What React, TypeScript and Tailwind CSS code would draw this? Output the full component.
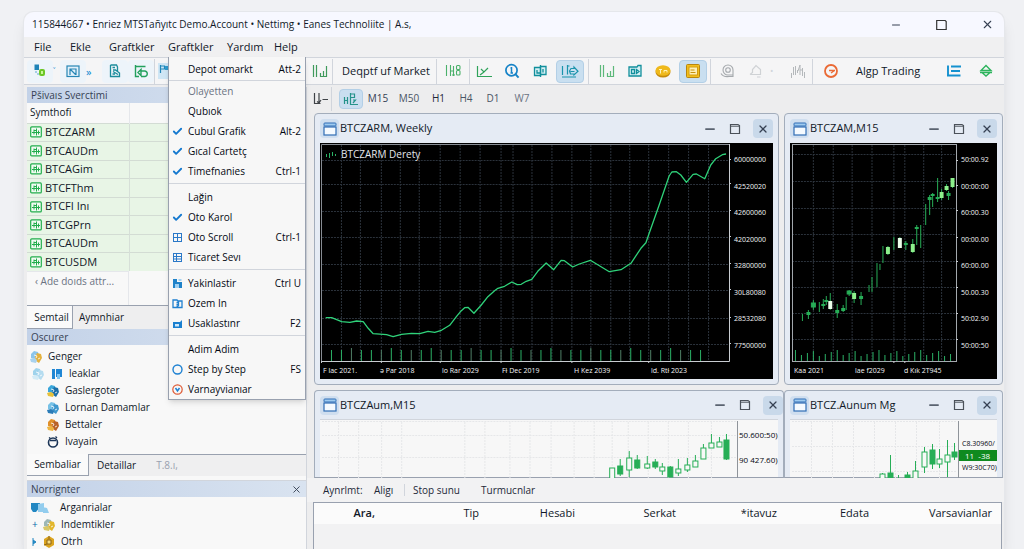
import React from "react";
import { Check, Minus, X } from "lucide-react";

type IconProps = { className?: string };

type Candle = {
  x: number;
  high: number;
  low: number;
  top?: number;
  bottom?: number;
  tone?: "solid" | "hollow" | "bright" | "white";
};

/* ---------- DATA ---------- */

const symbols = ["BTCZARM", "BTCAUDm", "BTCAGim", "BTCFThm", "BTCFI Inı", "BTCGPrn", "BTCAUDm", "BTCUSDM"];

const timeframes = [
  { name: "M15", style: "w-[30px] text-gray-700" },
  { name: "M50", style: "w-[32px] text-gray-600" },
  { name: "H1", style: "w-[27px] text-gray-800" },
  { name: "H4", style: "w-[28px] text-gray-600" },
  { name: "D1", style: "w-[26px] text-gray-600" },
  { name: "W7", style: "w-[32px] text-gray-500" },
];

const orderColumns = [
  { name: "Ara,", style: "w-[66px] pr-[5px] font-semibold" },
  { name: "Tip", style: "w-[104px] pr-[5px] font-normal" },
  { name: "Hesabi", style: "w-[96px] pr-[5px] font-normal" },
  { name: "Serkat", style: "w-[101px] pr-[5px] font-normal" },
  { name: "*itavuz", style: "w-[101px] pr-[5px] font-normal" },
  { name: "Edata", style: "w-[92px] pr-[5px] font-normal" },
  { name: "Varsavianlar", style: "w-[127px] pr-[9px] font-normal" },
];

const linePoints =
  "5.7,174.7 11.7,174.7 21.7,178.7 30,179.3 36.7,178 43.3,178.7 48.3,185.3 53.3,190.7 66.7,191.7 73.3,193.7 81.7,191.3 91.7,190.3 100,190.7 108.3,188.3 115,189.3 121.7,187.3 130,182.3 136.7,173.7 141.7,167.7 145,164.7 148.3,164.3 154.3,170.3 161.7,162 168.3,153.7 175,147.7 178.3,145.3 185,143.3 192.3,139 197.7,141.7 201.7,141.3 206.7,138.3 212.3,136.3 218.3,128.3 226.7,120 234.3,126.7 241.7,117.3 245,117.7 253.3,124 260,121 271,117.3 290,128.7 301.7,126.7 311.7,120.3 321.7,105.3 326.7,99.7 330,90.3 340,62 350,33 352.7,29 357.3,28.7 361.7,32 367.3,39.3 374,31.3 377.3,31 385.7,35.7 391.7,22 396.7,15.7 403.3,11.7 407,11";

const darkCandles: Candle[] = [
  { x: 12, high: 171, low: 178 },
  { x: 18, high: 167, low: 176, top: 169, bottom: 172 },
  { x: 23, high: 157, low: 167, top: 160, bottom: 164, tone: "solid" },
  { x: 29, high: 159, low: 169 },
  { x: 33, high: 156, low: 166, top: 161, bottom: 163 },
  { x: 36, high: 153, low: 162, top: 157, bottom: 159 },
  { x: 40, high: 150, low: 167, top: 158, bottom: 166, tone: "white" },
  { x: 47, high: 161, low: 175, top: 167, bottom: 170 },
  { x: 53, high: 162, low: 169, top: 165, bottom: 168 },
  { x: 56, high: 154, low: 167 },
  { x: 59, high: 147, low: 153, top: 148, bottom: 151, tone: "solid" },
  { x: 64, high: 148, low: 160, top: 150, bottom: 156, tone: "bright" },
  { x: 71, high: 149, low: 162, top: 153, bottom: 156 },
  { x: 79, high: 142, low: 149 },
  { x: 82, high: 134, low: 149 },
  { x: 87, high: 120, low: 144 },
  { x: 90, high: 121, low: 127 },
  { x: 93, high: 103, low: 120 },
  { x: 98, high: 103, low: 112, top: 104, bottom: 111, tone: "bright" },
  { x: 104, high: 94, low: 107 },
  { x: 110, high: 94, low: 105, top: 95, bottom: 105, tone: "white" },
  { x: 116, high: 98, low: 107, top: 100, bottom: 102 },
  { x: 123, high: 96, low: 110, top: 101, bottom: 109, tone: "bright" },
  { x: 127, high: 82, low: 102, top: 84, bottom: 86 },
  { x: 131, high: 82, low: 105 },
  { x: 136, high: 61, low: 82 },
  { x: 140, high: 52, low: 72, top: 54, bottom: 57 },
  { x: 143, high: 50, low: 64, top: 51, bottom: 53 },
  { x: 148, high: 35, low: 59, top: 54, bottom: 56 },
  { x: 152, high: 46, low: 57, top: 49, bottom: 55, tone: "bright" },
  { x: 157, high: 41, low: 48, top: 43, bottom: 47, tone: "bright" },
  { x: 159, high: 48, low: 57, top: 50, bottom: 53 },
  { x: 163, high: 35, low: 45, top: 35, bottom: 44, tone: "bright" },
];

const lightCandles: Candle[] = [
  { x: 291, high: 48, low: 58, top: 48, bottom: 60, tone: "hollow" },
  { x: 299, high: 39, low: 56, top: 46, bottom: 54, tone: "solid" },
  { x: 308, high: 31, low: 57, top: 38, bottom: 50, tone: "hollow" },
  { x: 316, high: 35, low: 49, top: 40, bottom: 48, tone: "solid" },
  { x: 326, high: 36, low: 49, top: 44, bottom: 48, tone: "hollow" },
  { x: 334, high: 39, low: 49, top: 42, bottom: 47, tone: "solid" },
  { x: 341, high: 43, low: 55, top: 47, bottom: 51, tone: "hollow" },
  { x: 349, high: 46, low: 57, top: 47, bottom: 57, tone: "solid" },
  { x: 357, high: 39, low: 56, top: 49, bottom: 53, tone: "hollow" },
  { x: 366, high: 38, low: 52, top: 45, bottom: 50, tone: "hollow" },
  { x: 374, high: 35, low: 47, top: 41, bottom: 47, tone: "hollow" },
  { x: 382, high: 24, low: 39, top: 28, bottom: 39, tone: "hollow" },
  { x: 390, high: 14, low: 28, top: 23, bottom: 28, tone: "hollow" },
  { x: 398, high: 17, low: 27, top: 22, bottom: 27, tone: "hollow" },
  { x: 405, high: 14, low: 40, top: 20, bottom: 39, tone: "solid" },
];

const lightCandlesSmall: Candle[] = [
  { x: 92, high: 53, low: 58, top: 54, bottom: 60, tone: "hollow" },
  { x: 100, high: 35, low: 58, top: 53, bottom: 60, tone: "solid" },
  { x: 108, high: 55, low: 58 },
  { x: 117, high: 52, low: 58, top: 55, bottom: 60, tone: "solid" },
  { x: 125, high: 41, low: 58, top: 51, bottom: 60, tone: "hollow" },
  { x: 134, high: 27, low: 53, top: 32, bottom: 47, tone: "hollow" },
  { x: 142, high: 24, low: 49, top: 30, bottom: 44, tone: "solid" },
  { x: 149, high: 29, low: 48, top: 39, bottom: 44, tone: "hollow" },
  { x: 157, high: 20, low: 57, top: 35, bottom: 42, tone: "hollow" },
  { x: 164, high: 23, low: 40, top: 32, bottom: 37, tone: "solid" },
];

/* ---------- ICONS ---------- */

const WindowIcon = () => (
  <svg className="w-[14px] h-[14px]" viewBox="0 0 14 14" fill="none">
    <rect x="1" y="5" width="12" height="8" fill="#f5faff" stroke="#2f6db5" strokeWidth="1.2" />
    <rect x="1" y="1" width="12" height="3" rx="0.8" fill="#9fcbf0" stroke="#2f6db5" />
  </svg>
);

const MaximizeIcon = () => (
  <svg className="w-[12px] h-[12px]" viewBox="0 0 12 12" fill="none" stroke="#4b5159">
    <path d="M1.5 1.5h7.5l1.5 1v8h-9z" strokeWidth="1.2" />
    <path d="M2 3.2h8" />
  </svg>
);

const SymbolIcon = () => (
  <svg className="w-[12px] h-[12px]" viewBox="0 0 12 12" fill="none" stroke="#22ad4c">
    <rect x="0.7" y="0.9" width="10.6" height="10" rx="1" strokeWidth="1.2" fill="#f1fbf2" />
    <path d="M2 6.500h8M4 3.500v5M6.500 2.500v7M8.500 4.500v4M4 4.500h2.500" />
  </svg>
);

const BarsIcon = ({ className }: IconProps) => (
  <svg className={`w-4 h-4 ${className}`} viewBox="0 0 16 16" fill="none" stroke="currentColor" strokeWidth="1.2">
    <path d="M1.5 2v12M4.5 2v12M8.5 10v4M11.5 8v6M14.5 3v11M8 13.5h7" />
  </svg>
);

const CandlesIcon = ({ className }: IconProps) => (
  <svg className={`w-4 h-4 ${className}`} viewBox="0 0 16 16" fill="none" stroke="currentColor" strokeWidth="1.1">
    <path d="M1.5 2v11M5.500 2v11M5 8h3M8.5 3v10M7 12h3" />
    <rect x="11.5" y="2.500" width="3.500" height="4" rx="1" />
    <rect x="11.5" y="7.500" width="3.500" height="4.500" rx="1" />
  </svg>
);

const WaveBarsIcon = () => (
  <svg className="w-4 h-4" viewBox="0 0 16 16" fill="none" stroke="#b4b8bb">
    <path d="M1.500 10v5M3.500 4v8M5.500 3v9M7.500 7v3M8 8l2-6v10M12.500 5v8M14.500 9v6M10 7h3" />
  </svg>
);

const LineChartIcon = () => (
  <svg className="w-4 h-4" viewBox="0 0 16 16" fill="none" stroke="#2fa35a" strokeWidth="1.2">
    <path d="M1.5 3v10.5H16M5 6l3 3 4-4M8 9l-4 3" />
  </svg>
);

const LensIcon = () => (
  <svg className="w-4 h-4" viewBox="0 0 16 16" fill="none" stroke="#1683c7">
    <circle cx="7.5" cy="7.2" r="5.6" strokeWidth="1.7" />
    <path d="M11.6 11.4l3 3.2" strokeWidth="2" />
    <path d="M7.5 4v6M6.500 5h1M6.500 10h2.500" strokeWidth="1.5" />
  </svg>
);

const SplitIcon = () => (
  <svg className="w-4 h-4" viewBox="0 0 16 16" fill="none" stroke="#118f9c" strokeWidth="1.3">
    <path d="M2.500 4.500h6v8h-6zM8.500 3.500h5.500v8H8.500z" fill="#d4eff4" />
    <path d="M8.500 2v12M5 7v3h3M11 6v3.500" />
  </svg>
);

const ShiftIcon = () => (
  <svg className="w-[18px] h-4" viewBox="0 0 18 16" fill="none" stroke="#1a93ac" strokeWidth="1.2">
    <path d="M1.5 3v9M6.500 2v9.500M6.500 3h2M1 14h14" />
    <path d="M9.500 8.500h4M10 5.500h3v-1.500l4 4.300-4 3.700V11h-3.500l-1-3z" />
  </svg>
);

const FlagIcon = () => (
  <svg className="w-4 h-4" viewBox="0 0 16 16" fill="none">
    <rect x="0" y="0" width="16" height="16" fill="#cfe6f5" />
    <path d="M2.500 2v8M2.500 3h4v3h-4" stroke="#2287b8" strokeWidth="1.200" />
    <path d="M7 3h3v4H7z" fill="#2f9bd0" />
  </svg>
);

const CameraIcon = () => (
  <svg className="w-4 h-4" viewBox="0 0 16 16" fill="none" stroke="#118f9c" strokeWidth="1.3">
    <path d="M2 4h8l1-1.500h3v10.500H2z" fill="#d4eff4" />
    <path d="M4.500 6.500h3v4h-3zM9.500 6.500l2.500 2-2.500 2z" />
  </svg>
);

const CoinIcon = () => (
  <svg className="w-[18px] h-4" viewBox="0 0 18 16" fill="none">
    <ellipse cx="9" cy="9" rx="7.5" ry="5.5" fill="#c58a0b" />
    <ellipse cx="9" cy="7.5" rx="7.5" ry="5.3" fill="#efb91c" />
    <path d="M5 6.5h3M6.5 6.5v4M10 9.5V7.500h3v2" stroke="#fff3bd" />
  </svg>
);

const GoldCardIcon = () => (
  <svg className="w-4 h-4" viewBox="0 0 16 16" fill="none">
    <rect x="1.5" y="1.5" width="13" height="13" rx="1" fill="#f2bf1d" stroke="#b8860f" />
    <rect x="4" y="4" width="8.500" height="8" fill="#fdf0b8" stroke="#d39d10" />
    <path d="M5.500 7h4M5.500 9.500h5" stroke="#c8930e" />
  </svg>
);

const AtIcon = () => (
  <svg className="w-4 h-4" viewBox="0 0 16 16" fill="none" stroke="#a5a9ad" strokeWidth="1.1">
    <circle cx="8" cy="7" r="2.300" />
    <path d="M3 7a5 5 0 0 1 10 0v6.500H9M3 7a5 5 0 0 0 5 5h5M1 10.500c1.500 2.500 4 3.500 8 3" />
  </svg>
);

const BellIcon = () => (
  <svg className="w-4 h-4" viewBox="0 0 16 16" fill="none" stroke="#cfd2d5" strokeWidth="1.2">
    <path d="M2 11.500l2.500-2V6.500L8 2.500l4.500 4v5H2M9 14h3.500" />
  </svg>
);

const GaugeIcon = () => (
  <svg className="w-4 h-4" viewBox="0 0 16 16" fill="none" stroke="#ea6a35">
    <circle cx="8" cy="8" r="6" strokeWidth="1.8" />
    <path d="M6 7.500h6M8 10l3.500-2.500" strokeWidth="1.3" />
  </svg>
);

const LinesIcon = () => (
  <svg className="w-4 h-4" viewBox="0 0 16 16" fill="none" stroke="#1591cf" strokeWidth="1.900">
    <path d="M2 2.500v10.500M5 3.500h10M5 8h9M1 12.500h13.500" />
  </svg>
);

const DiamondIcon = () => (
  <svg className="w-[14px] h-[14px]" viewBox="0 0 14 14" fill="none" stroke="#2cb45c" strokeWidth="1.4">
    <path d="M7 1.500L2 6.500h10zM1 8.500h12M3 8.500L7 12l4-3.500" />
  </svg>
);

const NewChartIcon = () => (
  <svg className="w-4 h-4" viewBox="0 0 16 16">
    <rect x="2.500" y="1.500" width="4.500" height="5.500" fill="#1d83b8" />
    <path d="M3 9h2M5 11h2" stroke="#5fa9cf" />
    <rect x="7" y="6" width="6" height="7" rx="2" fill="#6cc727" />
    <path d="M9 8h2v3H9z" fill="#c9f49a" />
  </svg>
);

const ProfileIcon = () => (
  <svg className="w-4 h-4" viewBox="0 0 16 16" fill="none" stroke="#2786b5" strokeWidth="1.2">
    <rect x="2" y="3" width="12" height="10.500" fill="#e1f1fb" />
    <path d="M5 12V6h6v6M5.500 6.500l5 5" />
  </svg>
);

const SheetIcon = () => (
  <svg className="w-4 h-4" viewBox="0 0 16 16" fill="none" stroke="#1b8c9c" strokeWidth="1.300">
    <path d="M3.500 2h6l1 2v4M3.500 2v11.500h9V10l-4-3H6M5.500 4.500H8M6 8.500l5 3M5.500 11H8" />
  </svg>
);

const RefreshChartIcon = () => (
  <svg className="w-4 h-4" viewBox="0 0 16 16" fill="none" stroke="#23a05d" strokeWidth="1.400">
    <path d="M2.500 2v11.500H6M2.500 3.500h10M5 9.500l3-3v6zM8 8h4a2.800 2.800 0 0 1 0 5.500H8" />
  </svg>
);

const AxisIcon = () => (
  <svg className="w-4 h-4" viewBox="0 0 16 16" fill="none" stroke="#3f4347" strokeWidth="1.200">
    <path d="M2.500 2v10.500h6M7 2v9M5 10.500L7 12l2-3M10.500 8.500H16" />
  </svg>
);

const GridChartIcon = () => (
  <svg className="w-4 h-4" viewBox="0 0 16 16" fill="none" stroke="#26938b" strokeWidth="1.200">
    <path d="M1.500 6v7M1.500 9.500h3M4.500 6v7M7.500 2v11.500H15M7.500 3h4v3.500h-4M10 9h2.500L10 12" />
  </svg>
);

/* overlapping figures, tinted per tree entry */
const TreeIcon = ({ a, b, c }: { a: string; b: string; c: string }) => (
  <svg className="w-[14px] h-[14px]" viewBox="0 0 14 14">
    <path d="M2 4l3-3 4 1 1 4-4 3-4-1z" fill={a} />
    <path d="M8 3l4 1 1 4-3 5-3-2-1-4z" fill={b} />
    <path d="M1 9l4-1 3 2-1 3-5-1z" fill={c} />
    <path d="M5 5l3 1-1 2M9 9l2-1" stroke="#fff" strokeWidth="0.800" fill="none" />
  </svg>
);

const MenuGridIcon = ({ dense }: { dense?: boolean }) => (
  <svg className="w-[11px] h-[11px]" viewBox="0 0 11 11" fill="none" stroke="#2a78c8">
    <rect x="1.500" y="1.500" width="8" height="8" />
    <path d={dense ? "M4.500 1.500v8M1.500 4.500h8M1.500 7h8" : "M5.500 1.500v8M1.500 5.500h8"} />
  </svg>
);

const MenuSaveIcon = () => (
  <svg className="w-[11px] h-[11px]" viewBox="0 0 11 11">
    <path d="M1 1h4v3h5v6H1z" fill="#1f82c9" />
    <path d="M6.500 1h3v2h-3zM3 6h4v4H3z" fill="#9fd0f2" />
  </svg>
);

const MenuBoxIcon = () => (
  <svg className="w-[11px] h-[11px]" viewBox="0 0 11 11" fill="none" stroke="#2080cf" strokeWidth="1.300">
    <path d="M1 2h4l1 1h4v6.500H1zM4.500 4.500h2V8M4.500 6.300h2M4.500 8h2" />
  </svg>
);

const MenuFolderIcon = () => (
  <svg className="w-[11px] h-[11px]" viewBox="0 0 11 11">
    <path d="M1 4h7l2-2v8H1z" fill="#1a80d0" />
    <path d="M3 6h4v2.500H3z" fill="#cfe8fa" />
  </svg>
);

const MenuCircleIcon = () => (
  <svg className="w-[11px] h-[11px]" viewBox="0 0 11 11" fill="none">
    <circle cx="5.500" cy="5.500" r="4.500" stroke="#1c80d2" strokeWidth="1.400" />
  </svg>
);

const MenuAlertIcon = () => (
  <svg className="w-[11px] h-[11px]" viewBox="0 0 11 11" fill="none">
    <circle cx="5.500" cy="5.500" r="4.700" stroke="#de5b36" strokeWidth="1.200" />
    <path d="M3.500 4l2 3 2-3" stroke="#1c80d2" strokeWidth="1.500" />
  </svg>
);

const Tick = () => <Check className="w-[11px] h-[11px] text-[#1478cf]" strokeWidth={4} />;

/* ---------- MENU ---------- */

type MenuEntry = { label: string; hint?: string; icon?: React.ReactNode; faded?: boolean };

const menuGroups: MenuEntry[][] = [
  [{ label: "Depot omarkt", hint: "Att-2" }],
  [
    { label: "Olayetten", faded: true },
    { label: "Qubıok" },
    { label: "Cubul Grafik", hint: "Alt-2", icon: <Tick /> },
    { label: "Gıcal Cartetç", icon: <Tick /> },
    { label: "Timefnanies", hint: "Ctrl-1", icon: <Tick /> },
  ],
  [
    { label: "Lağin" },
    { label: "Oto Karol", icon: <Tick /> },
    { label: "Oto Scroll", hint: "Ctrl-1", icon: <MenuGridIcon /> },
    { label: "Ticaret Sevı", icon: <MenuGridIcon dense /> },
  ],
  [
    { label: "Yakinlastir", hint: "Ctrl U", icon: <MenuSaveIcon /> },
    { label: "Ozem In", icon: <MenuBoxIcon /> },
    { label: "Usaklastınr", hint: "F2", icon: <MenuFolderIcon /> },
  ],
  [
    { label: "Adim Adim" },
    { label: "Step by Step", hint: "FS", icon: <MenuCircleIcon /> },
    { label: "Varnayvianıar", icon: <MenuAlertIcon /> },
  ],
];

const ChartMenu = () => (
  <div
    role="menu"
    className="absolute left-0 top-full z-20 w-[138px] pt-[2px] bg-[#f7f7f7] border border-t-0 border-gray-400 shadow-md"
  >
    {menuGroups.map((group, i) => (
      <div
        key={i}
        className={i === 0 ? "" : i === 1 ? "mt-px border-t border-gray-300" : "mt-[2px] border-t border-gray-300 pt-[3px]"}
      >
        {group.map((item) => (
          <button
            key={item.label}
            role="menuitem"
            className={`flex items-center w-full h-5 pl-[3px] pr-1 text-[10px] ${item.faded ? "text-gray-500" : "text-gray-950"}`}
          >
            <span className="w-4 shrink-0">{item.icon}</span>
            <span className="whitespace-nowrap">{item.label}</span>
            <span className="ml-auto whitespace-nowrap">{item.hint}</span>
          </button>
        ))}
      </div>
    ))}
  </div>
);

/* ---------- TOOLBAR ---------- */

type ToolButtonProps = { label: string; active?: boolean; narrow?: boolean; children: React.ReactNode };

const ToolButton = ({ label, active, narrow, children }: ToolButtonProps) => (
  <button
    aria-label={label}
    className={`flex items-center justify-center h-[23px] shrink-0 rounded-sm ${narrow ? "w-[26px]" : "w-7"} ${
      active ? "bg-[#c9dff0] border border-[#b3cfe6]" : ""
    } ${narrow ? "bg-[#edf4fa]" : ""}`}
  >
    {children}
  </button>
);

const Divider = () => <span className="w-px h-[25px] shrink-0 bg-gray-300" />;

const Toolbar = () => (
  <div className="flex items-center h-7 bg-[#f5f5f6] border-t border-b border-gray-300">
    <div className="flex items-center w-[284px] shrink-0 pl-[3px] overflow-hidden">
      <ToolButton label="New chart" narrow><NewChartIcon /></ToolButton>
      <span className="w-[7px] text-[9px] text-sky-600">˅</span>
      <ToolButton label="Profiles" narrow><ProfileIcon /></ToolButton>
      <span className="w-4 text-[11px] leading-none text-sky-600">»</span>
      <ToolButton label="Sheet" narrow><SheetIcon /></ToolButton>
      <ToolButton label="Refresh" narrow><RefreshChartIcon /></ToolButton>
      <Divider />
      <span className="w-[3px]" />
      <FlagIcon />
    </div>
    <div className="flex items-center flex-1">
      <div className="w-6 flex justify-center">
        <BarsIcon className="text-[#3f9a5c]" />
      </div>
      <Divider />
      <button className="w-[103px] pl-[3px] text-[11px] text-gray-900 whitespace-nowrap">Deqptf uf Market</button>
      <Divider />
      <div className="w-8 flex justify-center">
        <CandlesIcon className="text-[#4bb16b]" />
      </div>
      <Divider />
      <ToolButton label="Line chart"><LineChartIcon /></ToolButton>
      <ToolButton label="Zoom"><LensIcon /></ToolButton>
      <div className="flex gap-[2px]">
        <ToolButton label="Split"><SplitIcon /></ToolButton>
        <ToolButton label="Shift" active><ShiftIcon /></ToolButton>
      </div>
      <span className="w-1" />
      <Divider />
      <span className="w-1" />
      <ToolButton label="Volumes"><BarsIcon className="text-[#5cb87a]" /></ToolButton>
      <ToolButton label="Snapshot"><CameraIcon /></ToolButton>
      <div className="flex gap-[2px]">
        <ToolButton label="Balance"><CoinIcon /></ToolButton>
        <ToolButton label="Orders" active><GoldCardIcon /></ToolButton>
      </div>
      <span className="w-[3px]" />
      <Divider />
      <span className="w-[3px]" />
      <ToolButton label="Mail"><AtIcon /></ToolButton>
      <ToolButton label="Alerts"><BellIcon /></ToolButton>
      <span className="w-[14px] text-[9px] text-gray-300">•</span>
      <ToolButton label="Depth"><WaveBarsIcon /></ToolButton>
      <Divider />
      <span className="w-1" />
      <ToolButton label="Speed"><GaugeIcon /></ToolButton>
      <button className="px-[11px] text-[11px] text-gray-900 whitespace-nowrap">Algp Trading</button>
      <div className="flex gap-1 ml-auto pr-1">
        <ToolButton label="List"><LinesIcon /></ToolButton>
        <ToolButton label="Market"><DiamondIcon /></ToolButton>
      </div>
    </div>
  </div>
);

/* ---------- LEFT PANELS ---------- */

const PanelHeader = ({ title, closable }: { title: string; closable?: boolean }) => (
  <div className="flex items-center justify-between h-4 px-1 bg-linear-to-r from-[#c3d2e8] to-[#d9e3f0]">
    <h2 className="text-[10px] text-gray-700">{title}</h2>
    {closable && (
      <button aria-label="Close">
        <X className="w-[11px] h-[11px] text-gray-700" strokeWidth={2} />
      </button>
    )}
  </div>
);

const TreeRow = ({ icon, label, indent }: { icon: React.ReactNode; label: string; indent: string }) => (
  <li className={`flex items-center h-[17px] text-[10px] text-gray-900 ${indent}`}>
    {icon}
    <span className="whitespace-nowrap">{label}</span>
  </li>
);

const Sidebar = () => (
  <aside className="w-[280px] shrink-0 ml-[3px] mt-[2px] bg-[#f8f8f8] border-r border-gray-300">
    <PanelHeader title="Pšivaıs Sverctimi" />
    <table className="w-full h-[168px] table-fixed border-collapse text-[11px] text-gray-900">
      <thead>
        <tr className="h-5">
          <th className="w-[102px] pl-[3px] py-0 text-left text-[10px] font-normal border-r border-gray-200">Symthofi</th>
          <th aria-label="Price" />
        </tr>
      </thead>
      <tbody>
        {symbols.map((name, i) => (
          <tr key={i} className="bg-[#e8f5e6] border-t border-[#d3dcd4]">
            <td className="pl-[3px] py-0 border-r border-[#d6dfd8]">
              <div className="flex items-center gap-[3px] h-[17px]">
                <SymbolIcon />
                {name}
              </div>
            </td>
            <td />
          </tr>
        ))}
      </tbody>
    </table>
    <div className="w-[102px] h-[34px] pt-[2px] pl-2 border-t border-r border-gray-200 text-[10px] text-gray-500">
      ‹ Ade doıds attr...
    </div>

    <div className="flex h-6 bg-[#eeeeef] border-t border-gray-400 text-[10px] text-gray-900">
      <button className="w-[46px] bg-[#fafafa] border-r border-b border-gray-400 pl-1 whitespace-nowrap">Semtail</button>
      <button className="px-[6px] whitespace-nowrap">Aymnhiar</button>
    </div>

    <PanelHeader title="Oscurer" />
    <ul className="pt-[3px] pb-1">
      <TreeRow indent="pl-[2px] gap-[5px]" label="Genger" icon={<TreeIcon a="#8cc5ea" b="#e3b13f" c="#a9d2ee" />} />
      <TreeRow
        indent="pl-1 gap-[5px]"
        label="leaklar"
        icon={
          <>
            <TreeIcon a="#9fd3ec" b="#b5dcf0" c="#d3ebf6" />
            <svg className="w-[14px] h-[14px]" viewBox="0 0 14 14">
              <path d="M2 2h3v10H2zM6 2h6v8H6z" fill="#1f86d4" />
              <path d="M7 7h3v5H7z" fill="#7dc3f2" />
            </svg>
          </>
        }
      />
      <TreeRow indent="pl-[19px] gap-[5px]" label="Gaslergoter" icon={<TreeIcon a="#3aa6da" b="#1c6fa8" c="#e7c13a" />} />
      <TreeRow indent="pl-[19px] gap-[5px]" label="Lornan Damamlar" icon={<TreeIcon a="#77c1e6" b="#3f97cd" c="#2b7cb8" />} />
      <TreeRow indent="pl-[19px] gap-[5px]" label="Bettaler" icon={<TreeIcon a="#e0902b" b="#b9622a" c="#edb441" />} />
      <TreeRow
        indent="pl-[19px] gap-[5px]"
        label="Ivayain"
        icon={
          <svg className="w-[14px] h-[14px]" viewBox="0 0 14 14" fill="none" stroke="#1c3557">
            <circle cx="7" cy="7.500" r="4.500" strokeWidth="1.600" />
            <path d="M4 5.500h6M9.500 1.500L11 3M3 2.500l1.500 1" strokeWidth="1.300" />
          </svg>
        }
      />
    </ul>

    <div className="flex h-[22px] bg-[#efeff0] text-[11px] text-gray-900">
      <button className="w-[62px] bg-[#fafafa] border-r border-b border-gray-400 text-[10px] whitespace-nowrap">Sembaliar</button>
      <button className="px-2 border-t border-gray-400 text-[10px] whitespace-nowrap">Detaillar</button>
      <button className="flex-1 pl-3 text-left text-[10px] text-gray-400 border-t border-gray-400">T.8.ı,</button>
    </div>

    <div className="mt-1 border-t border-gray-300">
      <PanelHeader title="Norrignter" closable />
      <ul className="pt-[2px]">
        <TreeRow
          indent="pl-[3px] gap-[10px]"
          label="Arganrialar"
          icon={
            <svg className="w-5 h-[14px]" viewBox="0 0 20 14">
              <path d="M1 2h9v4L6 11H3L1 8z" fill="#2287c2" />
              <path d="M8 3l6-1v9H8zM13 6l4 1 2 5h-6z" fill="#93cdee" />
            </svg>
          }
        />
        <TreeRow
          indent="pl-[5px] gap-[5px]"
          label="Indemtikler"
          icon={
            <>
              <span className="w-[5px] text-sky-700">+</span>
              <TreeIcon a="#9db7b5" b="#e2b72e" c="#d8c766" />
            </>
          }
        />
        <TreeRow
          indent="pl-[5px] gap-[5px]"
          label="Otrh"
          icon={
            <>
              <svg className="w-[5px] h-2" viewBox="0 0 5 8">
                <path d="M1 0v8M1 2l3 2-3 2" fill="#2287c2" stroke="#2287c2" />
              </svg>
              <svg className="w-[14px] h-[14px]" viewBox="0 0 14 14">
                <path d="M7 1l5 3v6l-5 3-5-3V4z" fill="#dba41f" />
                <path d="M5 5h4v4H5zM7 1v3M5 9l-3 1" stroke="#8a651a" fill="#f6dd85" />
              </svg>
            </>
          }
        />
      </ul>
    </div>
  </aside>
);

/* ---------- CHARTS ---------- */

const tones = {
  solid: "#27ae57",
  hollow: "#f8f9f8",
  bright: "#8df08c",
  white: "#eaffea",
};

const Candles = ({ items, body }: { items: Candle[]; body: number }) => (
  <g>
    {items.map((c, i) => (
      <g key={i} stroke="#27ae57">
        <path d={`M${c.x + 0.5} ${c.high}V${c.low}`} />
        {c.top !== undefined && c.bottom !== undefined && (
          <rect
            x={c.x + 0.5 - body / 2}
            y={c.top}
            width={body}
            height={c.bottom - c.top}
            fill={tones[c.tone ?? "solid"]}
            stroke={c.tone === "bright" || c.tone === "white" || !c.tone ? "none" : "#27ae57"}
          />
        )}
      </g>
    ))}
  </g>
);

type GridProps = { xs: number[]; ys: number[]; width: number; height: number; color: string };

const Grid = ({ xs, ys, width, height, color }: GridProps) => (
  <g stroke={color} strokeDasharray="2 1">
    {xs.map((x) => (
      <path key={`x${x}`} d={`M${x + 0.5} 2V${height}`} />
    ))}
    {ys.map((y) => (
      <path key={`y${y}`} d={`M2 ${y + 0.5}H${width}`} />
    ))}
  </g>
);

type ChartWindowProps = { title: string; open?: boolean; flush?: boolean; children: React.ReactNode };

const ChartWindow = ({ title, open, flush, children }: ChartWindowProps) => (
  <section
    className={`min-w-0 px-[5px] bg-[#e5ebf4] border border-[#a3adbb] ${open ? "rounded-t border-b-gray-400" : "rounded pb-[5px]"}`}
  >
    <header className={`flex items-center ${open ? "h-7" : "h-[29px]"} ${flush ? "-mr-[5px]" : ""}`}>
      <span className="flex items-center justify-center w-[19px] h-[19px] rounded-sm bg-[#cfdeef]">
        <WindowIcon />
      </span>
      <h3 className="ml-px text-[11px] text-gray-900 whitespace-nowrap">{title}</h3>
      <div className="flex items-center ml-auto gap-3">
        <button aria-label="Minimize"><Minus className="w-[14px] h-[14px] text-[#5a6370]" strokeWidth={3} /></button>
        <button aria-label="Maximize"><MaximizeIcon /></button>
        <button aria-label="Close" className="flex items-center justify-center w-5 h-[19px] rounded-sm bg-[#c9d9ea]">
          <X className="w-3 h-3 text-gray-700" strokeWidth={2.5} />
        </button>
      </div>
    </header>
    {children}
  </section>
);

const PriceScale = ({ labels, width }: { labels: string[]; width: string }) => (
  <ul className={`flex flex-col justify-between shrink-0 pt-[11px] pb-[11px] pl-[3px] text-[7px] leading-[12px] font-medium text-gray-100 ${width}`}>
    {labels.map((l, i) => (
      <li key={i} className="whitespace-nowrap">{l}</li>
    ))}
  </ul>
);

const weeklyXs = [21, 40, 61, 80, 99, 120, 140, 160, 181, 193, 212, 232, 252, 271, 291, 310, 329, 349, 369, 389];
const weeklyTicks = [1, 61, 120, 181, 252, 329];
const weeklyBars = Array.from({ length: 38 }, (_, i) => 11 + i * 10);
const weeklyDates = [
  { name: "F lac 2021.", style: "w-[57px]" },
  { name: "ə Par 2018", style: "w-[62px]" },
  { name: "lo Rar 2029", style: "w-[60px]" },
  { name: "Fł Dec 2019", style: "w-[72px]" },
  { name: "H Kez 2039", style: "w-[77px]" },
  { name: "ld. Rtł 2023", style: "w-[60px]" },
];

const WeeklyChart = () => (
  <div className="relative bg-black">
    <div className="flex">
      <svg className="flex-1 min-w-0 h-[220px]" viewBox="0 0 412 220" preserveAspectRatio="none" fill="none">
        <Grid xs={weeklyXs} ys={[17, 41, 68, 94, 121, 147, 175, 201]} width={410} height={218} color="#2b323b" />
        <path d="M1.500 218.500V1.500H410.500" stroke="#8a8f96" />
        <path d="M410.500 1V218.500H1" stroke="#c9cdd2" />
        {weeklyTicks.map((x) => (
          <path key={x} d={`M${x + 0.5} 218v3`} stroke="#c9cdd2" />
        ))}
        {weeklyBars.map((x, i) => (
          <path key={x} d={`M${x + 0.5} ${i % 4 === 2 ? 205 : 207}V218`} stroke={i % 3 === 2 ? "#4f8066" : "#2bb266"} />
        ))}
        {[17, 41, 68, 94, 121, 147, 175, 201].map((y) => (
          <path key={y} d={`M410 ${y - 0.5}h2`} stroke="#c9cdd2" />
        ))}
        <polyline points={linePoints} stroke="#2fd27a" strokeWidth="1.300" strokeLinejoin="round" />
      </svg>
      <PriceScale
        width="w-[42px]"
        labels={["60000000", "42520020", "42600060", "42020000", "32800000", "30L80080", "28532080", "77500000"]}
      />
    </div>
    <ul className="flex h-4 pl-[3px] text-[7px] leading-[15px] font-medium text-gray-100">
      {weeklyDates.map((d) => (
        <li key={d.name} className={`whitespace-nowrap ${d.style}`}>{d.name}</li>
      ))}
    </ul>
    <p className="absolute left-[6px] top-1 flex items-center gap-[5px] text-[10px] text-gray-200">
      <svg className="w-[10px] h-2" viewBox="0 0 10 8" stroke="#2bb266">
        <path d="M0.500 3v3M3.500 2v5M6.500 1v4M9.500 3v2" />
      </svg>
      BTCZARM Derety
    </p>
  </div>
);

const quarterBars = Array.from({ length: 27 }, (_, i) => 5 + i * 6);

const QuarterChart = () => (
  <div className="bg-black">
    <div className="flex">
      <svg className="flex-1 min-w-0 h-[220px]" viewBox="0 0 169 220" preserveAspectRatio="none" fill="none">
        <Grid xs={[23, 43, 62, 82, 104, 115, 134, 152]} ys={[11, 38, 65, 91, 118, 144, 170, 196]} width={167} height={218} color="#2b323b" />
        <rect x="2.500" y="1.500" width="165" height="217" stroke="#a5aab0" />
        {quarterBars.map((x, i) => (
          <path key={x} d={`M${x + 0.5} ${207 + ((i * 5) % 7)}V218`} stroke="#2bb266" />
        ))}
        <path d="M104.500 218v3M115.500 218v3M167 17.500h2M167 42.500h2M167 67.500h2M167 94.500h2M167 118.500h2M167 144.500h2M167 170.500h2M167 196.500h2" stroke="#c9cdd2" />
        <Candles items={darkCandles} body={4} />
      </svg>
      <PriceScale
        width="w-[39px]"
        labels={["50:00.92", "00:00:00", "60:00.30", "00:00.00", "60:00.00", "50.00.30", "50:02.90", "50:00:50"]}
      />
    </div>
    <ul className="flex h-4 pl-1 text-[7px] leading-[15px] font-medium text-gray-100 whitespace-nowrap">
      <li className="w-[61px]">Kaa 2021</li>
      <li className="w-[49px]">lae f2029</li>
      <li className="w-[50px]">d Kık 2T945</li>
    </ul>
  </div>
);

/* ---------- PAGE ---------- */

const App = () => {
  return (
    <div className="min-h-screen flex pt-[11px] pl-[23px] pr-[19px] bg-[#f0f1f4] font-['Open_Sans','Noto_Sans',sans-serif]">
      <div className="flex flex-col flex-1 min-w-0 bg-[#ededee] border border-b-0 border-gray-200 rounded-t-[10px] shadow-lg">
        {/* TITLE BAR */}
        <header className="flex items-center h-[25px] pl-2 bg-[#f7f8ff] rounded-t-[10px]">
          <h1 className="text-[10px] text-gray-900 whitespace-nowrap">
            115844667 • Enriez MTSTañyıtc Demo.Account • Nettimg • Eanes Technoliite | A.s,
          </h1>
          <div className="flex items-center gap-[34px] ml-auto pr-[10px]">
            <button aria-label="Minimize window"><Minus className="w-3 h-3 text-gray-700" /></button>
            <button aria-label="Maximize window">
              <svg className="w-[11px] h-[11px]" viewBox="0 0 11 11" fill="none" stroke="#333">
                <path d="M0.700 1.500h8.500l1 1v8H0.700z" strokeWidth="1.200" />
              </svg>
            </button>
            <button aria-label="Close window"><X className="w-[13px] h-[13px] text-gray-700" strokeWidth={2} /></button>
          </div>
        </header>

        {/* MENU BAR */}
        <nav className="flex h-5 text-[11px] text-gray-900 bg-[#f0f0f1]">
          <button className="w-[46px] pl-[10px] text-left">File</button>
          <button className="w-[39px] text-left">Ekle</button>
          <button className="w-[35px] flex-none text-left">Graftkler</button>
          <div className="relative w-[83px] pl-[24px]">
            <div className="relative">
              <button className="h-5">Graftkler</button>
              <ChartMenu />
            </div>
          </div>
          <button className="w-[47px] text-left">Yardım</button>
          <button className="text-left">Help</button>
        </nav>

        <Toolbar />

        <div className="flex flex-1 min-h-0">
          <Sidebar />

          <main className="flex flex-col flex-1 min-w-0">
            {/* TIMEFRAMES */}
            <div className="flex items-center h-[27px] pl-[5px]">
              <AxisIcon />
              <span className="w-px h-6 ml-[3px] mr-[7px] bg-gray-300" />
              <button aria-label="Grid" className="flex items-center justify-center w-6 h-5 rounded-sm bg-[#cadef0] border border-[#b3cfe6]">
                <GridChartIcon />
              </button>
              <div className="flex text-[10px]">
                {timeframes.map((t) => (
                  <button key={t.name} className={t.style}>{t.name}</button>
                ))}
              </div>
            </div>

            {/* CHART WINDOWS */}
            <div className="grid grid-cols-[1fr_219px] gap-x-[5px] mt-px ml-[7px] mr-[1px]">
              <ChartWindow title="BTCZARM, Weekly">
                <WeeklyChart />
              </ChartWindow>
              <ChartWindow title="BTCZAM,M15">
                <QuarterChart />
              </ChartWindow>
            </div>
            <div className="grid grid-cols-[1fr_219px] mt-[5px] ml-[7px] mr-[1px]">
              <ChartWindow title="BTCZAum,M15" open flush>
                <div className="flex h-[58px] bg-[#f7f7f7] border-t border-gray-300">
                  <svg className="flex-1 min-w-0 h-[58px]" viewBox="0 0 417 58" preserveAspectRatio="none" fill="none">
                    <Grid xs={[18, 38, 61, 81, 144, 164, 189, 209, 230, 253, 273, 291, 307, 327, 347, 367, 390]} ys={[1, 15, 37]} width={416} height={58} color="#e6e7e9" />
                    <Candles items={lightCandles} body={5} />
                    <path d="M416.500 1V58" stroke="#8f949a" />
                  </svg>
                  <ul className="w-[40px] shrink-0 pt-[8px] pl-px text-[8px] leading-[13px] text-gray-950 whitespace-nowrap">
                    <li>50.600:50)</li>
                    <li className="mt-3">90 427.60)</li>
                  </ul>
                </div>
              </ChartWindow>
              <ChartWindow title="BTCZ.Aunum Mg" open>
                <div className="flex h-[58px] bg-[#f7f7f7] border-t border-gray-300">
                  <svg className="flex-1 min-w-0 h-[58px]" viewBox="0 0 169 58" preserveAspectRatio="none" fill="none">
                    <Grid xs={[21, 42, 63, 84, 105, 126, 149]} ys={[1, 26, 51]} width={167} height={58} color="#e6e7e9" />
                    <Candles items={lightCandlesSmall} body={5} />
                    <path d="M168.500 1V58" stroke="#8f949a" />
                  </svg>
                  <ul className="w-[38px] shrink-0 pt-[17px] text-[7px] leading-[13px] text-gray-950 whitespace-nowrap">
                    <li className="pl-[3px]">C8.30960/</li>
                    <li className="pl-[6px] bg-[#0f8a1f] text-white text-[8px] leading-[11px]">11 &nbsp;-38</li>
                    <li className="pl-[3px]">W9:30C70)</li>
                  </ul>
                </div>
              </ChartWindow>
            </div>

            {/* TERMINAL */}
            <div className="flex items-center h-6 pl-4 text-[10px] text-gray-800 bg-[#f2f2f3]">
              <button className="w-[51px] text-left">Aynrlmt:</button>
              <button className="w-[30px] text-left">Aligı</button>
              <span className="w-px h-3 mr-2 bg-gray-300" />
              <button className="w-[68px] text-left">Stop sunu</button>
              <button className="text-left">Turmucnlar</button>
            </div>
            <div className="flex-1 ml-[6px] mr-[2px] border border-b-0 border-gray-400 bg-[#f2f2f3]">
              <table className="w-full table-fixed text-[11px] text-gray-900">
                <thead>
                  <tr className="h-[21px] bg-[#fbfbfb]">
                    {orderColumns.map((c) => (
                      <th key={c.name} className={`py-0 text-right whitespace-nowrap ${c.style}`}>{c.name}</th>
                    ))}
                  </tr>
                </thead>
              </table>
            </div>
          </main>
        </div>
      </div>
    </div>
  );
};

export default App;
